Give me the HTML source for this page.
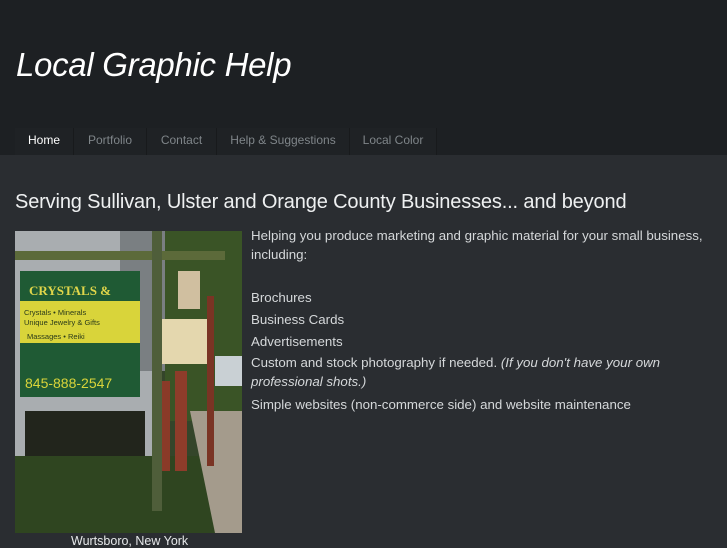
<!DOCTYPE html>
<html><head><meta charset="utf-8"><style>
*{margin:0;padding:0;box-sizing:border-box}
body{width:727px;height:545px;overflow:hidden;background:#2a2d31;font-family:"Liberation Sans",sans-serif;position:relative}
#hdr{position:absolute;left:0;top:0;width:727px;height:155px;background:#1d2023}
h1{position:absolute;left:16px;top:46px;font-size:33px;font-style:italic;font-weight:normal;color:#fff;letter-spacing:-0.3px}
.tab{position:absolute;top:128px;height:27px;background:#1f2225;border-right:1px solid #181a1c;color:#7f8589;font-size:12px;line-height:24px;text-align:center}
h2{position:absolute;left:15px;top:191px;font-size:20px;font-weight:normal;color:#eef0f1;letter-spacing:-0.15px;white-space:nowrap}
.t{position:absolute;left:251px;color:#d5d8da;font-size:13.3px;line-height:19px}
#photo{position:absolute;left:15px;top:231px;width:227px;height:302px;overflow:hidden;background:#4a5a38}
.cap{position:absolute;left:71px;top:534px;color:#e6e8ea;font-size:12.5px}
</style></head><body>
<div id="hdr"></div>
<h1>Local Graphic Help</h1>
<div class="tab" style="left:15px;width:59px;color:#fff">Home</div>
<div class="tab" style="left:74px;width:73px">Portfolio</div>
<div class="tab" style="left:147px;width:70px">Contact</div>
<div class="tab" style="left:217px;width:133px">Help &amp; Suggestions</div>
<div class="tab" style="left:350px;width:87px">Local Color</div>
<h2>Serving Sullivan, Ulster and Orange County Businesses... and beyond</h2>
<div class="t" style="top:226px;width:470px">Helping you produce marketing and graphic material for your small business, including:</div>
<div class="t" style="top:288px">Brochures</div>
<div class="t" style="top:310px">Business Cards</div>
<div class="t" style="top:332px">Advertisements</div>
<div class="t" style="top:353px;width:450px">Custom and stock photography if needed. <i>(If you don't have your own professional shots.)</i></div>
<div class="t" style="top:395px">Simple websites (non-commerce side) and website maintenance</div>
<div id="photo">
<svg width="227" height="302" viewBox="0 0 227 302">
<rect width="227" height="302" fill="#34452a"/>
<rect x="0" y="0" width="140" height="230" fill="#a9adb0"/>
<rect x="105" y="0" width="45" height="140" fill="#7a7f82"/>
<rect x="150" y="0" width="77" height="190" fill="#3a5426"/>
<rect x="163" y="40" width="22" height="38" fill="#d0bfa0"/>
<rect x="200" y="125" width="27" height="30" fill="#c9d0d4"/>
<rect x="10" y="180" width="120" height="60" fill="#22251c"/>
<rect x="0" y="225" width="227" height="77" fill="#2f4520"/>
<polygon points="175,180 227,180 227,302 200,302" fill="#a49b8c"/>
<rect x="0" y="20" width="210" height="9" fill="#5c6a3a"/>
<rect x="5" y="40" width="120" height="126" fill="#1f5a34"/>
<rect x="5" y="70" width="120" height="42" fill="#d9d43a"/>
<text x="14" y="64" font-size="13" fill="#e0d64a" font-family="Liberation Serif" font-weight="bold">CRYSTALS &amp;</text>
<text x="12" y="77" font-size="8" fill="#e0d64a" font-family="Liberation Serif" font-weight="bold" dy="-8"></text>
<text x="9" y="84" font-size="7.5" fill="#2a3a1a">Crystals • Minerals</text>
<text x="9" y="94" font-size="7.5" fill="#2a3a1a">Unique Jewelry &amp; Gifts</text>
<text x="12" y="108" font-size="7.5" fill="#2a3a1a">Massages • Reiki</text>
<text x="10" y="157" font-size="14" fill="#d9d43a">845-888-2547</text>
<rect x="145" y="88" width="50" height="45" fill="#e4d7ae"/>
<rect x="145" y="150" width="10" height="90" fill="#8a3a28"/>
<rect x="160" y="140" width="12" height="100" fill="#8e3c2a"/>
<rect x="192" y="65" width="7" height="170" fill="#7a3424"/>
<rect x="137" y="0" width="10" height="280" fill="#4f5e3a"/>
</svg>
</div>
<div class="cap">Wurtsboro, New York</div>
</body></html>
